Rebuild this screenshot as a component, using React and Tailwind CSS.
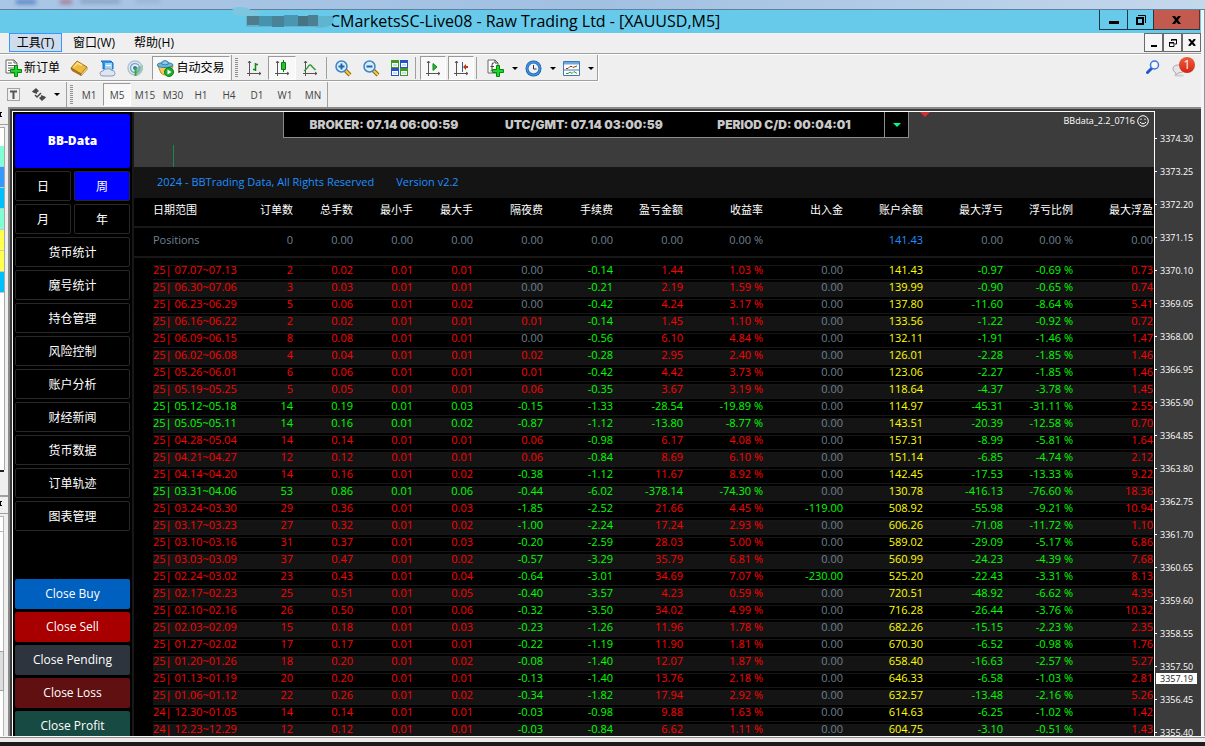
import { useState } from 'react';

const COLUMNS = [
  { label: '日期范围', width: 'w-[99px]' },
  { label: '订单数', width: 'w-[60px]' },
  { label: '总手数', width: 'w-[60px]' },
  { label: '最小手', width: 'w-[60px]' },
  { label: '最大手', width: 'w-[60px]' },
  { label: '隔夜费', width: 'w-[70px]' },
  { label: '手续费', width: 'w-[70px]' },
  { label: '盈亏金额', width: 'w-[70px]' },
  { label: '收益率', width: 'w-[80px]' },
  { label: '出入金', width: 'w-[80px]' },
  { label: '账户余额', width: 'w-[80px]' },
  { label: '最大浮亏', width: 'w-[80px]' },
  { label: '浮亏比例', width: 'w-[70px]' },
  { label: '最大浮盈', width: '' },
];

const POSITIONS = ['Positions', '0', '0.00', '0.00', '0.00', '0.00', '0.00', '0.00', '0.00 %', '', '141.43', '0.00', '0.00 %', '0.00'];

const ROWS = [
  ['25| 07.07~07.13', '2', '0.02', '0.01', '0.01', '0.00', '-0.14', '1.44', '1.03 %', '0.00', '141.43', '-0.97', '-0.69 %', '0.73'],
  ['25| 06.30~07.06', '3', '0.03', '0.01', '0.01', '0.00', '-0.21', '2.19', '1.59 %', '0.00', '139.99', '-0.90', '-0.65 %', '0.74'],
  ['25| 06.23~06.29', '5', '0.06', '0.01', '0.02', '0.00', '-0.42', '4.24', '3.17 %', '0.00', '137.80', '-11.60', '-8.64 %', '5.41'],
  ['25| 06.16~06.22', '2', '0.02', '0.01', '0.01', '0.01', '-0.14', '1.45', '1.10 %', '0.00', '133.56', '-1.22', '-0.92 %', '0.72'],
  ['25| 06.09~06.15', '8', '0.08', '0.01', '0.01', '0.00', '-0.56', '6.10', '4.84 %', '0.00', '132.11', '-1.91', '-1.46 %', '1.47'],
  ['25| 06.02~06.08', '4', '0.04', '0.01', '0.01', '0.02', '-0.28', '2.95', '2.40 %', '0.00', '126.01', '-2.28', '-1.85 %', '1.46'],
  ['25| 05.26~06.01', '6', '0.06', '0.01', '0.01', '0.01', '-0.42', '4.42', '3.73 %', '0.00', '123.06', '-2.27', '-1.85 %', '1.46'],
  ['25| 05.19~05.25', '5', '0.05', '0.01', '0.01', '0.06', '-0.35', '3.67', '3.19 %', '0.00', '118.64', '-4.37', '-3.78 %', '1.45'],
  ['25| 05.12~05.18', '14', '0.19', '0.01', '0.03', '-0.15', '-1.33', '-28.54', '-19.89 %', '0.00', '114.97', '-45.31', '-31.11 %', '2.55'],
  ['25| 05.05~05.11', '14', '0.16', '0.01', '0.02', '-0.87', '-1.12', '-13.80', '-8.77 %', '0.00', '143.51', '-20.39', '-12.58 %', '0.70'],
  ['25| 04.28~05.04', '14', '0.14', '0.01', '0.01', '0.06', '-0.98', '6.17', '4.08 %', '0.00', '157.31', '-8.99', '-5.81 %', '1.64'],
  ['25| 04.21~04.27', '12', '0.12', '0.01', '0.01', '0.06', '-0.84', '8.69', '6.10 %', '0.00', '151.14', '-6.85', '-4.74 %', '2.12'],
  ['25| 04.14~04.20', '14', '0.16', '0.01', '0.02', '-0.38', '-1.12', '11.67', '8.92 %', '0.00', '142.45', '-17.53', '-13.33 %', '9.22'],
  ['25| 03.31~04.06', '53', '0.86', '0.01', '0.06', '-0.44', '-6.02', '-378.14', '-74.30 %', '0.00', '130.78', '-416.13', '-76.60 %', '18.36'],
  ['25| 03.24~03.30', '29', '0.36', '0.01', '0.03', '-1.85', '-2.52', '21.66', '4.45 %', '-119.00', '508.92', '-55.98', '-9.21 %', '10.94'],
  ['25| 03.17~03.23', '27', '0.32', '0.01', '0.02', '-1.00', '-2.24', '17.24', '2.93 %', '0.00', '606.26', '-71.08', '-11.72 %', '1.10'],
  ['25| 03.10~03.16', '31', '0.37', '0.01', '0.03', '-0.20', '-2.59', '28.03', '5.00 %', '0.00', '589.02', '-29.09', '-5.17 %', '6.86'],
  ['25| 03.03~03.09', '37', '0.47', '0.01', '0.02', '-0.57', '-3.29', '35.79', '6.81 %', '0.00', '560.99', '-24.23', '-4.39 %', '7.68'],
  ['25| 02.24~03.02', '23', '0.43', '0.01', '0.04', '-0.64', '-3.01', '34.69', '7.07 %', '-230.00', '525.20', '-22.43', '-3.31 %', '8.13'],
  ['25| 02.17~02.23', '25', '0.51', '0.01', '0.05', '-0.40', '-3.57', '4.23', '0.59 %', '0.00', '720.51', '-48.92', '-6.62 %', '4.35'],
  ['25| 02.10~02.16', '26', '0.50', '0.01', '0.06', '-0.32', '-3.50', '34.02', '4.99 %', '0.00', '716.28', '-26.44', '-3.76 %', '10.32'],
  ['25| 02.03~02.09', '15', '0.18', '0.01', '0.03', '-0.23', '-1.26', '11.96', '1.78 %', '0.00', '682.26', '-15.15', '-2.23 %', '2.35'],
  ['25| 01.27~02.02', '17', '0.17', '0.01', '0.01', '-0.22', '-1.19', '11.90', '1.81 %', '0.00', '670.30', '-6.52', '-0.98 %', '1.76'],
  ['25| 01.20~01.26', '18', '0.20', '0.01', '0.02', '-0.08', '-1.40', '12.07', '1.87 %', '0.00', '658.40', '-16.63', '-2.57 %', '5.27'],
  ['25| 01.13~01.19', '20', '0.20', '0.01', '0.01', '-0.13', '-1.40', '13.76', '2.18 %', '0.00', '646.33', '-6.58', '-1.03 %', '2.81'],
  ['25| 01.06~01.12', '22', '0.26', '0.01', '0.02', '-0.34', '-1.82', '17.94', '2.92 %', '0.00', '632.57', '-13.48', '-2.16 %', '5.26'],
  ['24| 12.30~01.05', '14', '0.14', '0.01', '0.01', '-0.03', '-0.98', '9.88', '1.63 %', '0.00', '614.63', '-6.25', '-1.02 %', '1.42'],
  ['24| 12.23~12.29', '12', '0.12', '0.01', '0.01', '-0.03', '-0.84', '6.62', '1.11 %', '0.00', '604.75', '-3.10', '-0.51 %', '1.43'],
];

const PROFIT_COL = 7;
const BALANCE_COL = 10;

const PRICES = ['3374.30', '3373.25', '3372.20', '3371.15', '3370.10', '3369.05', '3368.00', '3366.95', '3365.90', '3364.85', '3363.80', '3362.75', '3361.70', '3360.65', '3359.60', '3358.55', '3357.50', '3356.45', '3355.40'];

const PERIODS = ['日', '周', '月', '年'];
const SECTIONS = ['货币统计', '魔号统计', '持仓管理', '风险控制', '账户分析', '财经新闻', '货币数据', '订单轨迹', '图表管理'];
const CLOSE_ACTIONS = [
  { label: 'Close Buy', color: 'bg-[#0060c0]' },
  { label: 'Close Sell', color: 'bg-[#a80000]' },
  { label: 'Close Pending', color: 'bg-[#2d343e]' },
  { label: 'Close Loss', color: 'bg-[#601010]' },
  { label: 'Close Profit', color: 'bg-[#164a42]' },
];

const TIMEFRAMES = ['M1', 'M5', 'M15', 'M30', 'H1', 'H4', 'D1', 'W1', 'MN'];
const CLOCKS = ['BROKER: 07.14 06:00:59', 'UTC/GMT: 07.14 03:00:59', 'PERIOD C/D: 00:04:01'];
const WATCH_ROWS = ['bg-[#7fffd4]', 'bg-[#3399ff]', 'bg-[#00bfff]', 'bg-[#7fffd4]', 'bg-[#ffff4d]', 'bg-[#ffff4d]', 'bg-[#00bfff]'];

function signColor(value) {
  if (value.startsWith('-')) return 'text-[#00ff00]';
  if (value === '0.00') return 'text-[#708090]';
  return 'text-[#ff0000]';
}

function cellColor(row, col) {
  if (col === BALANCE_COL) return 'text-[#ffff00]';
  if (col < 5) return signColor(row[PROFIT_COL]);
  return signColor(row[col]);
}

export default function App() {
  return (
    <div className="h-screen flex flex-col overflow-hidden bg-[#efefef] font-['Open_Sans','Noto_Sans_CJK_SC',sans-serif] text-black">
      <DesktopEdge />
      <div className="flex-1 min-h-0 flex">
        <div className="flex-1 min-w-0 flex flex-col">
          <TitleBar />
          <MenuBar />
          <MainToolbar />
          <PeriodToolbar />
          <div className="flex-1 min-h-0 flex">
            <MarketWatchEdge />
            <Chart />
          </div>
        </div>
        <div className="w-1 border-r border-[#8c949c] bg-[#f4f4f4]" />
      </div>
      <div className="h-[6px] shrink-0 border-t border-[#f8f8f8] bg-[#ececec]">
        <div className="border-t border-[#8a8a8a]" />
      </div>
      <div className="h-1 shrink-0 bg-[#1c1c1c]" />
    </div>
  );
}

function DesktopEdge() {
  return (
    <div className="relative h-[10px] shrink-0 border-b border-[#5f7f9a] bg-linear-to-r from-[#a9c6e6] via-[#a2c0e2] to-[#c4d8ec]">
      <div className="absolute inset-0 flex items-start overflow-hidden">
        <span className="ml-4 h-1 w-5 bg-[#4f7fc4] blur-[2px]" />
        <span className="ml-6 h-1 w-3 bg-[#a5738c] blur-[2px]" />
        <span className="ml-2 h-[3px] w-10 bg-[#7c96b8] blur-[2px]" />
        <span className="ml-4 h-[2px] w-6 bg-[#8aa2c2] blur-[2px]" />
      </div>
    </div>
  );
}

function TitleBar() {
  return (
    <header className="h-[23px] shrink-0 flex bg-[#67caea] pr-px">
      <div className="relative ml-[232px] w-[98px]">
        {/* account number is painted over */}
        <svg className="absolute bottom-0 left-0" width="103" height="26" viewBox="0 0 103 26" aria-hidden="true">
          <path d="M1 1Q7 -1 15 1Q19 4 30 5Q24 11 12 9Q2 10 0 5Z" fill="#7cc6df" />
          <path d="M14 9H100Q104 14 99 18Q92 22 80 20H14Z" fill="#5fb4cf" />
          <path d="M15 9H27V18H15Z" fill="#4e7c8b" />
          <path d="M27 9H40V19H27Z" fill="#4693ae" />
          <path d="M40 9H52V20H40Z" fill="#4a8298" />
          <path d="M52 8H66V19H52Z" fill="#4a96b0" />
          <path d="M66 9H76V19H66Z" fill="#457485" />
          <path d="M76 8H86V19H76Z" fill="#4c7f92" />
        </svg>
      </div>
      <h1 className="flex-1 truncate text-base leading-[22px]">CMarketsSC-Live08 - Raw Trading Ltd - [XAUUSD,M5]</h1>
      <div className="flex h-5 border-b border-l border-[#1d3742]">
        <button aria-label="Minimize" className="w-7 flex items-center justify-center border-r border-[#1d3742]">
          <svg width="10" height="10" viewBox="0 0 10 10"><path d="M0 6H10V9H0Z" /></svg>
        </button>
        <button aria-label="Restore" className="w-[26px] flex items-center justify-center border-r border-[#1d3742]">
          <svg width="10" height="10" viewBox="0 0 10 10" fill="none" stroke="#000">
            <path d="M1 3H7V9H1Z" strokeWidth="2" />
            <path d="M2 .5H9.500V8" />
          </svg>
        </button>
        <button aria-label="Close" className="w-[46px] flex items-center justify-center border-r border-[#6e2a25] bg-[#c35a50]">
          <svg width="9" height="8" viewBox="0 0 9 8"><path d="M0 0H3L4.500 2L6 0H9L6 4L9 8H6L4.500 6L3 8H0L3 4Z" /></svg>
        </button>
      </div>
    </header>
  );
}

function MenuBar() {
  return (
    <nav className="h-[22px] shrink-0 flex items-start border-b border-white text-xs leading-[18px] shadow-[inset_0_-1px_0_#a0a0a0]">
      <button className="ml-[9px] h-[19px] w-[53px] border border-[#3399ff] bg-[#cfdcec]">工具(T)</button>
      <button className="ml-[5px] h-[19px] w-[54px]">窗口(W)</button>
      <button className="ml-[6px] h-[19px] w-[54px]">帮助(H)</button>
      <div className="ml-auto flex">
        <button aria-label="Minimize chart" className="h-[19px] w-[19px] flex items-center justify-center border border-[#6a6a6a] bg-[#f6f6f6]">
          <svg width="8" height="8" viewBox="0 0 8 8"><path d="M1 6H7V8H1Z" /></svg>
        </button>
        <button aria-label="Restore chart" className="h-[19px] w-[19px] flex items-center justify-center border border-[#6a6a6a] bg-[#f6f6f6]">
          <svg width="8" height="8" viewBox="0 0 8 8" fill="none" stroke="#000">
            <path d="M.5 4H5V7.500H.5ZM0 3.500H5M2.500 2V.5H7.500V5H6M2 1H8" />
          </svg>
        </button>
        <button aria-label="Close chart" className="h-[19px] w-[19px] flex items-center justify-center border border-[#6a6a6a] bg-[#f6f6f6]">
          <svg width="8" height="7" viewBox="0 0 8 7" stroke="#000" strokeWidth="2"><path d="M1 0L7 7M7 0L1 7" /></svg>
        </button>
      </div>
    </nav>
  );
}

function Caret() {
  return <svg width="6" height="3" viewBox="0 0 6 3"><path d="M0 0H6L3 3Z" /></svg>;
}

function Grip() {
  return <div className="ml-[3px] mr-[2px] my-[3px] w-[3px] shrink-0 bg-[repeating-linear-gradient(#909090_0_1px,#efefef_1px_2px)]" />;
}

function Divider() {
  return <div className="mx-[2px] my-[2px] w-px shrink-0 bg-[#a0a0a0]" />;
}

function ToolButton({ label, pressed, width = 'w-7', children }) {
  const look = pressed ? 'border-t-[#9a9a9a] border-l-[#9a9a9a] border-b-white border-r-white bg-[#f8f8f8]' : 'border-transparent';
  return (
    <button aria-label={label} aria-pressed={pressed} className={`${width} my-px shrink-0 flex items-center justify-center gap-[2px] border ${look}`}>
      {children}
    </button>
  );
}

function MainToolbar() {
  return (
    <div className="flex h-[27px] shrink-0 items-start">
      <div className="flex h-[27px] border-b border-white border-r text-xs shadow-[inset_0_-1px_0_#a0a0a0,inset_-1px_0_0_#a0a0a0]">
        <ToolButton width="w-[65px]">
          <NewOrderIcon />
          <span>新订单</span>
        </ToolButton>
        <ToolButton label="Market watch"><BookIcon /></ToolButton>
        <ToolButton label="Community"><CloudIcon /></ToolButton>
        <ToolButton label="Signals"><SignalIcon /></ToolButton>
        <div className="w-[3px]" />
        <ToolButton width="w-[78px]" pressed>
          <AutoTradeIcon />
          <span>自动交易</span>
        </ToolButton>
        <div className="ml-px w-px bg-[#a0a0a0]" />
        <Grip />
        <ToolButton label="Bar chart"><BarChartIcon /></ToolButton>
        <ToolButton label="Candlesticks" pressed><CandleIcon /></ToolButton>
        <ToolButton label="Line chart"><LineChartIcon /></ToolButton>
        <Divider />
        <ToolButton label="Zoom in"><ZoomIcon plus /></ToolButton>
        <ToolButton label="Zoom out"><ZoomIcon /></ToolButton>
        <ToolButton label="Tile windows"><TilesIcon /></ToolButton>
        <Divider />
        <div className="flex gap-[2px] pl-[2px]">
          <ToolButton label="Auto scroll" width="w-[26px]" pressed><AutoScrollIcon /></ToolButton>
          <ToolButton label="Chart shift" width="w-[26px]" pressed><ChartShiftIcon /></ToolButton>
        </div>
        <Divider />
        <div className="flex pl-1 pr-px">
          <ToolButton label="Indicators" width="w-[38px]"><IndicatorIcon /><span className="w-1" /><Caret /></ToolButton>
          <ToolButton label="Periods" width="w-[38px]"><ClockIcon /><span className="w-1" /><Caret /></ToolButton>
          <ToolButton label="Templates" width="w-[38px]"><TemplateIcon /><span className="w-1" /><Caret /></ToolButton>
        </div>
      </div>
      <div className="ml-auto flex items-center gap-3 pt-[2px] pr-[6px]">
        <button aria-label="Search">
          <svg width="14" height="14" viewBox="0 0 14 14" fill="none">
            <path d="M1.500 12.500L6 8" stroke="#2456c8" strokeWidth="3" strokeLinecap="round" />
            <circle cx="8.500" cy="5" r="4" fill="#f4f9ff" stroke="#3d74dc" strokeWidth="1.500" />
          </svg>
        </button>
        <button aria-label="Notifications" className="relative h-5 w-[23px]">
          <svg width="14" height="14" viewBox="0 0 14 14" className="absolute bottom-0 left-0">
            <ellipse cx="7" cy="12.500" rx="5" ry="1" fill="#cfcfcf" />
            <path d="M1 6Q1 2 6 2H12V8Q10 10 6 10L4 12L3.500 9.500Q1 8.500 1 6Z" fill="#e6e6ea" stroke="#a8a8a8" />
          </svg>
          <span className="absolute top-0 right-0 h-4 w-4 rounded-full bg-linear-to-b from-[#ef5a3c] to-[#d3220e] text-center text-xs leading-4 text-white">1</span>
        </button>
      </div>
    </div>
  );
}

function PeriodToolbar() {
  const [active, setActive] = useState('M5');
  return (
    <div className="h-[25px] shrink-0 flex">
      <ToolButton label="Text label" width="w-[26px]">
        <svg width="13" height="13" viewBox="0 0 13 13" fill="none" stroke="#555">
          <path d="M.5 .5H12.500V12.500H.5Z" strokeDasharray="1 1" />
          <path d="M3 3.500H10M6.500 4V11" strokeWidth="2" />
        </svg>
      </ToolButton>
      <ToolButton label="Arrows" width="w-10">
        <svg width="14" height="13" viewBox="0 0 14 13" fill="#4a4a4a">
          <path d="M4 0L7 3L5 4.500V6L1 4.500L0 3.500ZM10 13L7 10L9 8.500V7L13 8.500L14 9.500Z" />
          <path d="M3 7L5 9L9 5" fill="none" stroke="#4a4a4a" strokeWidth="1.500" />
        </svg>
        <span className="w-1" />
        <Caret />
      </ToolButton>
      <div className="w-px bg-[#a0a0a0]" />
      <Grip />
      {TIMEFRAMES.map((t) => (
        <button
          key={t}
          onClick={() => setActive(t)}
          className={`w-7 my-px border pt-px text-[10px] text-[#444] ${t === active ? 'border-t-[#9a9a9a] border-l-[#9a9a9a] border-b-white border-r-white bg-[#f8f8f8]' : 'border-transparent'}`}
        >
          {t}
        </button>
      ))}
      <div className="w-px bg-[#a0a0a0]" />
    </div>
  );
}

// sliver of the docked panels on the left
function MarketWatchEdge() {
  return (
    <aside className="w-2 shrink-0 flex flex-col overflow-hidden pt-px" aria-hidden="true">
      <div className="h-[17px] shrink-0 border-b border-[#a0a0a0] pt-1">
        <PanelClose />
      </div>
      <div className="mt-[2px] w-[5px] h-[343px] shrink-0 border-t border-r border-[#a8a8a8] bg-white">
        <div className="h-[18px]" />
        {WATCH_ROWS.map((color, i) => (
          <div key={i} className={`h-[21px] border-b border-[#c8c8c8] ${color}`} />
        ))}
      </div>
      <div className="h-[2px] w-1 shrink-0 bg-[#222]" />
      <div className="h-[25px] shrink-0 border-b-2 border-[#a0a0a0]" />
      <div className="h-[17px] shrink-0 border-b border-[#a0a0a0] pt-1">
        <PanelClose />
      </div>
      <div className="mt-[2px] w-1 h-[16px] shrink-0 border-t border-r border-b border-[#b4b4b4] bg-white" />
      <div className="w-1 h-[119px] shrink-0 border-r border-[#b4b4b4] bg-white" />
      <div className="w-1 h-[40px] shrink-0 border border-l-0 border-[#a0a0a0] bg-[#dedede]" />
      <div className="w-1 flex-1 border-r border-[#b4b4b4] bg-white" />
    </aside>
  );
}

function PanelClose() {
  return <svg width="3" height="5" viewBox="0 0 3 5"><path d="M0 0H2V1H1V4H2V5H0Z" /></svg>;
}

function Chart() {
  return (
    <div className="flex-1 min-w-0 flex border-t-2 border-l-2 border-[#8a8a8a] bg-[#3c3c3c] pt-[2px] pl-[2px]">
      <main className="flex-1 min-w-0 flex border-t border-l border-r border-white overflow-hidden">
        <Sidebar />
        <div className="flex-1 min-w-0">
          <ChartTop />
          <div className="h-[31px] flex items-center gap-[22px] bg-[#141414] pl-[23px] text-[11px] text-[#1e90ff]">
            <span>2024 - BBTrading Data, All Rights Reserved</span>
            <span>Version v2.2</span>
          </div>
          <StatsTable />
        </div>
      </main>
      <PriceAxis />
    </div>
  );
}

function Sidebar() {
  const [period, setPeriod] = useState('周');
  const box = 'h-[30px] shrink-0 rounded-[2px] border border-[#282828] pt-[2px] text-xs text-white';
  return (
    <div className="w-[121px] shrink-0 flex flex-col gap-[3px] overflow-hidden border-r-2 border-[#181818] bg-black px-[2px] pt-[2px]">
      <button className="h-[54px] shrink-0 rounded-[2px] bg-[#0000ff] font-extrabold text-xs text-white">BB-Data</button>
      <div className="grid grid-cols-2 gap-[3px]">
        {PERIODS.map((p) => (
          <button key={p} onClick={() => setPeriod(p)} className={`${box} ${p === period ? 'bg-[#0000ff]' : ''}`}>{p}</button>
        ))}
      </div>
      {SECTIONS.map((s) => (
        <button key={s} className={box}>{s}</button>
      ))}
      <div className="h-[42px] shrink-0" />
      {CLOSE_ACTIONS.map((a) => (
        <button key={a.label} className={`h-[30px] shrink-0 rounded-[2px] text-xs text-white ${a.color}`}>{a.label}</button>
      ))}
    </div>
  );
}

function ChartTop() {
  return (
    <div className="h-[55px] flex items-start bg-[#3c3c3c]">
      <div className="w-[149px] h-full shrink-0 flex items-end pl-[39px]">
        <div className="h-[22px] w-px bg-[#128a50]" />
      </div>
      <div className="h-[26px] shrink-0 flex border-b border-l border-r border-[#8c8c8c] bg-black">
        {CLOCKS.map((c) => (
          <div key={c} className="w-[200px] text-center font-['Inter',sans-serif] font-black text-xs leading-[26px] text-[#c8c8c8]">{c}</div>
        ))}
        <button aria-label="Expand" className="w-6 flex items-center justify-center border-l border-[#8c8c8c]">
          <svg width="8" height="4" viewBox="0 0 8 4"><path d="M0 0H8L4 4Z" fill="#00ff7f" /></svg>
        </button>
      </div>
      <svg className="ml-[11px] shrink-0" width="10" height="5" viewBox="0 0 10 5"><path d="M0 0H10L5 5Z" fill="#d23030" /></svg>
      <div className="ml-auto flex items-center gap-[2px] pt-[3px] pr-[5px] text-[9px] leading-3 text-white">
        BBdata_2.2_0716
        <svg width="12" height="12" viewBox="0 0 12 12" fill="none" stroke="#fff">
          <circle cx="6" cy="6" r="5.300" />
          <path d="M3 7Q6 10.500 9 7M4 3.500V5M8 3.500V5" />
        </svg>
      </div>
    </div>
  );
}

function StatsTable() {
  return (
    <table className="w-full table-fixed border-separate border-spacing-0 bg-black text-right text-[11px]">
      <thead>
        <tr className="h-[30px] text-white">
          {COLUMNS.map((c, i) => (
            <th key={c.label} className={`${c.width} p-0 pb-1 border-b-2 border-[#181818] font-normal leading-4 whitespace-nowrap last:pr-px ${i === 0 ? 'pl-[19px] text-left' : ''}`}>{c.label}</th>
          ))}
        </tr>
      </thead>
      <tbody>
        <tr className="h-[30px]">
          {POSITIONS.map((v, i) => (
            <td key={i} className={`p-0 pb-1 border-b-2 border-[#181818] leading-4 last:pr-px ${i === 0 ? 'pl-[19px] text-left' : ''} ${i === BALANCE_COL ? 'text-[#1e90ff]' : 'text-[#708090]'}`}>{v}</td>
          ))}
        </tr>
      </tbody>
      <tbody className="[&>tr:first-child>td]:pt-[7px]">
        {ROWS.map((row, r) => (
          <tr key={row[0]}>
            {row.map((v, i) => (
              <td key={i} className={`p-0 pb-[2px] last:pr-px ${i === 0 ? 'pl-[19px] text-left' : ''} ${cellColor(row, i)}`}>
                <div className={`h-[15px] border-y border-[#161616] leading-[8px] whitespace-nowrap ${r % 2 ? 'bg-[#141414]' : ''}`}>{v}</div>
              </td>
            ))}
          </tr>
        ))}
      </tbody>
    </table>
  );
}

function PriceAxis() {
  return (
    <div className="relative w-[46px] shrink-0 overflow-hidden pt-[11px] text-[9px] text-white">
      <ul>
        {PRICES.map((p) => (
          <li key={p} className="h-[33px] flex items-center gap-[3px] leading-[7px]">
            <span className="h-px w-[2px] bg-white" />
            {p}
          </li>
        ))}
      </ul>
      <div className="absolute top-[562px] left-px w-[41px] bg-white pl-1 leading-[11px] text-[#222]">3357.19</div>
    </div>
  );
}

function NewOrderIcon() {
  return (
    <svg width="17" height="18" viewBox="0 0 17 18">
      <path d="M1 1H9L12 4V14H1Z" fill="#fff" stroke="#666" />
      <path d="M9 1V4H12M3 4H7M3 6.500H10M3 9H10M3 11.500H7" fill="none" stroke="#666" />
      <PlusMark />
    </svg>
  );
}

function PlusMark() {
  return <path d="M9.500 6.500H12.500V10.500H16.500V13.500H12.500V17.500H9.500V13.500H5.500V10.500H9.500Z" fill="#1fd62a" stroke="#08850f" />;
}

function BookIcon() {
  return (
    <svg width="18" height="16" viewBox="0 0 18 16">
      <path d="M1 8L7 1L17 7L11 14Z" fill="#eebb3c" stroke="#a9701a" />
      <path d="M1 8L11 14V15.500L2 10.500Z" fill="#b97d1c" stroke="#8d5a10" strokeWidth=".7" />
      <path d="M11 14L17 7V9.500L11.500 15.500Z" fill="#f7e2a4" stroke="#a9701a" strokeWidth=".7" />
      <path d="M4 7L7.500 3L12 5.500" fill="none" stroke="#fbe08c" strokeWidth="1.500" />
    </svg>
  );
}

function CloudIcon() {
  return (
    <svg width="17" height="17" viewBox="0 0 17 17">
      <path d="M2 1H12L14 3V9H4V3Z" fill="#2d94ea" stroke="#1a6dc0" />
      <path d="M6 3H13V9H6Z" fill="#9fd4fb" />
      <path d="M7 5.500H12" stroke="#fff" />
      <path d="M4 16Q1 16 1 13.500Q1 11 4 11Q5 8.500 8 9Q10 7.500 12 10Q16 10 16 13.500Q16 16 13 16Z" fill="#dde5f3" stroke="#8b9bbd" />
    </svg>
  );
}

function SignalIcon() {
  return (
    <svg width="17" height="17" viewBox="0 0 17 17" fill="none">
      <path d="M8 8L16 5Q17 14 9 16Z" fill="#8ecb8a" />
      <circle cx="8" cy="8" r="7" stroke="#a9c3d8" strokeWidth="1.500" />
      <circle cx="8" cy="8" r="4.500" stroke="#7aa6cc" strokeWidth="1.500" />
      <circle cx="8" cy="8" r="2" fill="#2f78c8" />
      <path d="M8.500 8V16" stroke="#3fa63c" strokeWidth="2" />
    </svg>
  );
}

function AutoTradeIcon() {
  return (
    <svg width="17" height="17" viewBox="0 0 17 17">
      <path d="M1 6L4 13Q8 17 13 13L16 6Z" fill="#f2cb58" stroke="#b98a22" />
      <ellipse cx="8" cy="5" rx="8" ry="2.500" fill="#6fb7de" stroke="#2f7fae" />
      <path d="M4.500 4Q4.500 .6 8 .6Q11.500 .6 11.500 4Q8 6 4.500 4Z" fill="#8ccbea" stroke="#2f7fae" />
      <circle cx="12" cy="12" r="4.500" fill="#1fae2a" stroke="#0d7a17" />
      <path d="M10.500 9.500L14.500 12L10.500 14.500Z" fill="#fff" />
    </svg>
  );
}

function Axes() {
  return <path d="M2.500 0V15M0 12.500H14M1 2L2.500 0L4 2M12 11L14 12.500L12 14" stroke="#555" fill="none" />;
}

function BarChartIcon() {
  return (
    <svg width="15" height="15" viewBox="0 0 15 15">
      <Axes />
      <path d="M8.500 2V10M6 8.500H8.500M8.500 3.500H11" stroke="#0b8a18" strokeWidth="1.500" />
    </svg>
  );
}

function CandleIcon() {
  return (
    <svg width="15" height="16" viewBox="0 0 15 16">
      <g transform="translate(0 1)"><Axes /></g>
      <path d="M8.500 0V12" stroke="#0b7a14" />
      <path d="M6.500 2.500H10.500V9.500H6.500Z" fill="#22c52e" stroke="#0b7a14" />
    </svg>
  );
}

function LineChartIcon() {
  return (
    <svg width="15" height="15" viewBox="0 0 15 15">
      <Axes />
      <path d="M1 10Q4 8 6 4.500Q7.500 3 9 5.500L12.500 9" fill="none" stroke="#2f9a3a" strokeWidth="1.500" />
    </svg>
  );
}

function ZoomIcon({ plus }) {
  return (
    <svg width="17" height="17" viewBox="0 0 17 17">
      <path d="M10 10L15 15" stroke="#8d6a14" strokeWidth="4" />
      <path d="M10.500 10.500L15 15" stroke="#f0cb45" strokeWidth="2" />
      <circle cx="6.500" cy="6.500" r="5.500" fill="#d9efff" stroke="#3f83c4" strokeWidth="1.500" />
      <path d={plus ? 'M3.500 6.500H9.500M6.500 3.500V9.500' : 'M3.500 6.500H9.500'} stroke="#2266aa" strokeWidth="2" />
    </svg>
  );
}

function TilesIcon() {
  return (
    <svg width="17" height="16" viewBox="0 0 17 16">
      <path d="M0 0H8V8H0ZM9 8H17V16H9Z" fill="#3f9a22" />
      <path d="M9 0H17V8H9ZM0 8H8V16H0Z" fill="#2354c4" />
      <path d="M1 3H7V7H1ZM10 3H16V7H10ZM1 11H7V15H1ZM10 11H16V15H10Z" fill="#fff" />
      <path d="M2 5H6M11 5H15M2 13H6M11 13H15" stroke="#9ab4dc" />
    </svg>
  );
}

function AutoScrollIcon() {
  return (
    <svg width="15" height="15" viewBox="0 0 15 15">
      <Axes />
      <path d="M7 2.500L11 6L7 9.500Z" fill="#25b832" stroke="#0b8a18" />
    </svg>
  );
}

function ChartShiftIcon() {
  return (
    <svg width="15" height="15" viewBox="0 0 15 15">
      <Axes />
      <path d="M8.500 1V11" stroke="#2b5f9a" />
      <path d="M14 6H10" stroke="#b93a10" strokeWidth="2" />
      <path d="M9 6L12 3V9Z" fill="#b93a10" />
    </svg>
  );
}

function IndicatorIcon() {
  return (
    <svg width="17" height="18" viewBox="0 0 17 18">
      <path d="M1 1H8L11 4V14H1Z" fill="#fff" stroke="#666" />
      <path d="M8 1V4H11M7 4Q5 3 5 6V11Q5 12 3.500 12M3.500 7.500H7" fill="none" stroke="#444" />
      <PlusMark />
    </svg>
  );
}

function ClockIcon() {
  return (
    <svg width="17" height="17" viewBox="0 0 17 17">
      <circle cx="8.500" cy="8.500" r="8" fill="#1558a8" />
      <circle cx="8.500" cy="8.500" r="6.500" fill="none" stroke="#3f95e2" strokeWidth="1.500" />
      <circle cx="8.500" cy="8.500" r="5" fill="#eef1f5" />
      <path d="M8.500 5V9H11.500" fill="none" stroke="#333" />
    </svg>
  );
}

function TemplateIcon() {
  return (
    <svg width="17" height="15" viewBox="0 0 17 15">
      <path d="M.5 .5H16.500V14.500H.5Z" fill="#fff" stroke="#3f78b4" />
      <path d="M1 1H16V3.500H1Z" fill="#6fa8dc" />
      <path d="M1 9H16" stroke="#3f78b4" />
      <path d="M3 7.500H5L7 5.500H9L10 6.500L14 5" fill="none" stroke="#9a3510" />
      <path d="M3 12.500H5L7 11L9 12.500L11 10.500L14 12.500" fill="none" stroke="#2f9a3a" />
    </svg>
  );
}
